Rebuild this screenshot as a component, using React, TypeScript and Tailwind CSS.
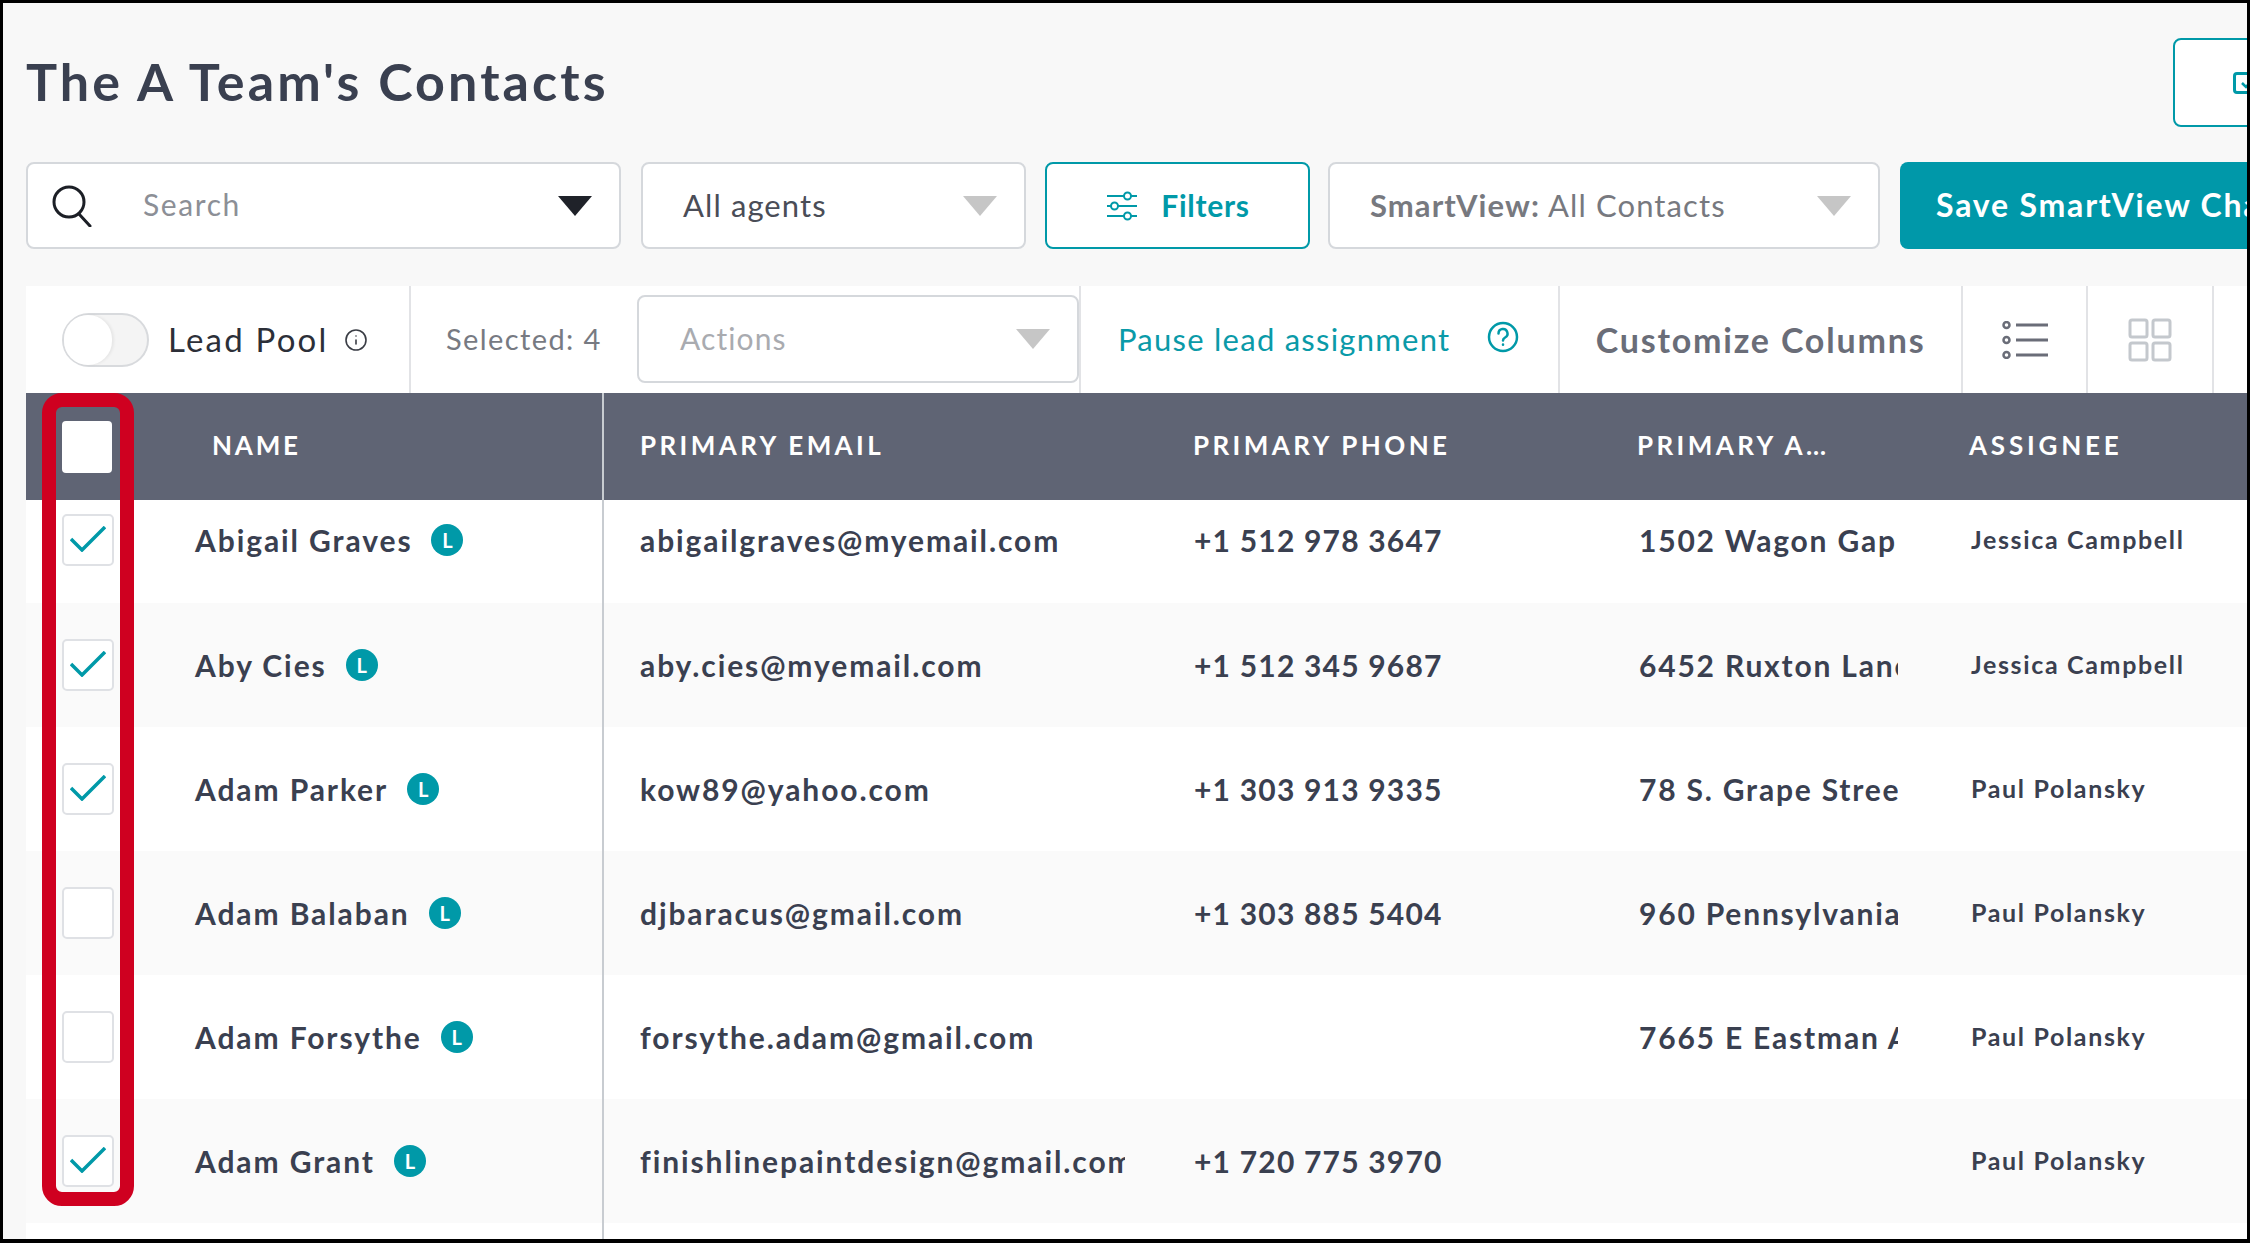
import { Info } from "lucide-react";

const rows = [
  { name: "Abigail Graves", email: "abigailgraves@myemail.com", phone: "+1 512 978 3647", address: "1502 Wagon Gap", agent: "Jessica Campbell", checked: true },
  { name: "Aby Cies", email: "aby.cies@myemail.com", phone: "+1 512 345 9687", address: "6452 Ruxton Lane", agent: "Jessica Campbell", checked: true },
  { name: "Adam Parker", email: "kow89@yahoo.com", phone: "+1 303 913 9335", address: "78 S. Grape Street", agent: "Paul Polansky", checked: true },
  { name: "Adam Balaban", email: "djbaracus@gmail.com", phone: "+1 303 885 5404", address: "960 Pennsylvania St", agent: "Paul Polansky", checked: false },
  { name: "Adam Forsythe", email: "forsythe.adam@gmail.com", phone: "", address: "7665 E Eastman Ave", agent: "Paul Polansky", checked: false },
  { name: "Adam Grant", email: "finishlinepaintdesign@gmail.com", phone: "+1 720 775 3970", address: "", agent: "Paul Polansky", checked: true },
];

const Caret = ({ dark = false }: { dark?: boolean }) => (
  <span
    className={`h-0 w-0 shrink-0 border-x-[17px] border-t-[20px] border-x-transparent ${dark ? "border-t-[#1f2229]" : "border-t-[#c6c6c6]"}`}
  />
);

const App = () => {
  return (
    <div className="relative h-[1243px] w-[2250px] overflow-hidden border-[3px] border-b-4 border-black bg-[#f8f8f8] font-['Lato',sans-serif]">
      <div className="ml-[23px] mt-[35px] flex h-[89px] items-center justify-between">
        <h1 className="mb-[4px] text-[52px] font-bold tracking-[3.1px] text-[#3a4050]">The A Team's Contacts</h1>
        <div className="flex h-[89px] w-[300px] shrink-0 translate-x-[226px] items-center rounded-l-lg border-2 border-[#0099a8] bg-white pl-[58px]">
          <span className="flex h-[22px] w-[30px] shrink-0 items-center justify-center rounded border-[3px] border-[#0099a8]">
            <svg width="14" height="12" viewBox="0 0 14 12" fill="none" stroke="#0099a8" strokeWidth="2.5">
              <path d="M1 6l4 4 8-9" />
            </svg>
          </span>
        </div>
      </div>

      <div className="ml-[23px] mt-[35px] flex h-[87px]">
        <div className="flex w-[595px] shrink-0 items-center rounded-lg border-2 border-[#d5d8dc] bg-white pl-[24px] pr-[27px]">
          <svg width="40" height="42" viewBox="0 0 40 42" fill="none" stroke="#1c1f26" strokeWidth="3" strokeLinecap="round" className="shrink-0">
            <circle cx="17" cy="17" r="15" />
            <path d="M27 29l11 12" />
          </svg>
          <span className="mb-[3px] ml-[51px] flex-1 text-[30px] tracking-[1.6px] text-[#8c8f96]">Search</span>
          <Caret dark />
        </div>
        <div className="ml-[20px] flex w-[385px] shrink-0 items-center justify-between rounded-lg border-2 border-[#d5d8dc] bg-white pl-[40px] pr-[27px]">
          <span className="text-[31px] tracking-[1.1px] text-[#4a4d57]">All agents</span>
          <Caret />
        </div>
        <div className="ml-[19px] flex w-[265px] shrink-0 items-center justify-center gap-[22px] rounded-lg border-2 border-[#0099a8] bg-white">
          <svg width="34" height="34" viewBox="0 0 34 34" fill="none" stroke="#0099a8" strokeWidth="2">
            <path d="M2 7h17M26 7h6M2 17h4M13 17h19M2 27h17M26 27h6" />
            <circle cx="22.5" cy="7" r="3.5" />
            <circle cx="9.5" cy="17" r="3.5" />
            <circle cx="22.5" cy="27" r="3.5" />
          </svg>
          <span className="text-[30px] font-bold tracking-[0.7px] text-[#0099a8]">Filters</span>
        </div>
        <div className="ml-[18px] flex w-[552px] shrink-0 items-center justify-between rounded-lg border-2 border-[#d5d8dc] bg-white pl-[40px] pr-[27px]">
          <span className="text-[31px] tracking-[1.1px] text-[#77797f]">
            <b className="font-bold">SmartView:</b> All Contacts
          </span>
          <Caret />
        </div>
        <div className="ml-[20px] flex w-[420px] shrink-0 items-center rounded-lg bg-[#0098a9] pl-[36px]">
          <span className="mb-[2px] whitespace-nowrap text-[32px] font-bold tracking-[1.8px] text-white">Save SmartView Changes</span>
        </div>
      </div>

      <div className="ml-[23px] mt-[37px] flex h-[107px] bg-white">
        <div className="flex w-[385px] shrink-0 items-center border-r-2 border-[#e2e3e6] pl-[36px]">
          <span className="relative h-[54px] w-[87px] shrink-0 rounded-full border-2 border-[#d8dadd] bg-[#f4f4f4]">
            <span className="absolute left-0 top-0 h-[50px] w-[48px] rounded-full bg-white shadow-[2px_0_3px_rgba(0,0,0,0.06)]" />
          </span>
          <span className="ml-[19px] text-[33px] tracking-[2.2px] text-[#2c2f38]">Lead Pool</span>
          <Info size={24} strokeWidth={1.6} className="ml-[16px] text-[#3a3d45]" />
        </div>
        <div className="flex w-[670px] shrink-0 items-center border-r-2 border-[#e2e3e6] pl-[35px] pr-0">
          <span className="mb-[2px] w-[191px] shrink-0 text-[29px] tracking-[1.4px] text-[#777a82]">Selected: 4</span>
          <div className="mb-[2px] flex h-[88px] w-[442px] shrink-0 items-center justify-between rounded-lg border-2 border-[#d5d8dc] bg-white pl-[41px] pr-[27px]">
            <span className="text-[30px] tracking-[1.1px] text-[#a9abb0]">Actions</span>
            <Caret />
          </div>
        </div>
        <div className="flex w-[479px] shrink-0 items-center border-r-2 border-[#e2e3e6] pl-[37px]">
          <span className="w-[369px] shrink-0 text-[31px] tracking-[1.25px] text-[#0a9aa8]">Pause lead assignment</span>
          <svg width="32" height="32" viewBox="0 0 32 32" fill="none" stroke="#0099a8" strokeWidth="2.5" strokeLinecap="round" className="mb-[6px]">
            <circle cx="16" cy="16" r="14" />
            <path d="M11.5 12.5a4.5 4.5 0 1 1 6.6 4c-1.4.8-2.1 1.5-2.1 3" />
            <path d="M16 23.5v.2" />
          </svg>
        </div>
        <div className="flex w-[403px] shrink-0 items-center justify-center border-r-2 border-[#e2e3e6]">
          <span className="text-[34px] font-bold tracking-[1.8px] text-[#6a6d78]">Customize Columns</span>
        </div>
        <div className="flex w-[125px] shrink-0 items-center justify-center border-r-2 border-[#e2e3e6]">
          <svg width="46" height="38" viewBox="0 0 46 38" fill="none" stroke="#6a6d78">
            <circle cx="4.5" cy="4" r="3" strokeWidth="2.5" />
            <circle cx="4.5" cy="19" r="3" strokeWidth="2.5" />
            <circle cx="4.5" cy="34" r="3" strokeWidth="2.5" />
            <path d="M14 4h32M14 19h32M14 34h32" strokeWidth="3" />
          </svg>
        </div>
        <div className="flex w-[126px] shrink-0 items-center justify-center border-r-2 border-[#e2e3e6]">
          <svg width="44" height="44" viewBox="0 0 44 44" fill="none" stroke="#c4c8cd" strokeWidth="3">
            <rect x="2" y="2" width="17" height="17" rx="2" />
            <rect x="25" y="2" width="17" height="17" rx="2" />
            <rect x="2" y="25" width="17" height="17" rx="2" />
            <rect x="25" y="25" width="17" height="17" rx="2" />
          </svg>
        </div>
      </div>

      <div className="ml-[23px] flex h-[107px] items-center bg-[#5f6474] text-[26px] font-bold tracking-[3.4px] text-white">
        <div className="flex h-full w-[578px] shrink-0 items-center border-r-2 border-[#c8ccd1] pl-[36px]">
          <span className="h-[52px] w-[50px] shrink-0 rounded-[4px] bg-white" />
          <span className="mb-[2px] ml-[100px] tracking-[2.8px]">NAME</span>
        </div>
        <span className="mb-[2px] w-[588px] shrink-0 pl-[36px]">PRIMARY EMAIL</span>
        <span className="mb-[2px] w-[445px] shrink-0 pl-[1px]">PRIMARY PHONE</span>
        <span className="mb-[2px] w-[332px] shrink-0">PRIMARY A…</span>
        <span className="mb-[2px] tracking-[3.8px]">ASSIGNEE</span>
      </div>

      <div className="ml-[23px] flex h-[739px] flex-col bg-white">
        {rows.map((r, i) => (
          <div
            key={r.name}
            className={`flex shrink-0 items-stretch ${i === 0 ? "h-[103px]" : "h-[124px]"} ${i % 2 === 1 ? "bg-[#fafafa]" : "bg-white"}`}
          >
            <div className={`flex w-[578px] shrink-0 items-center border-r-2 border-[#c8ccd1] pl-[36px] ${i === 0 ? "pb-[23px]" : ""}`}>
              <span className="flex h-[52px] w-[52px] shrink-0 items-center justify-center rounded-[5px] border-2 border-[#dfe1e5] bg-white">
                {r.checked && (
                  <svg width="36" height="26" viewBox="0 0 36 26" fill="none" stroke="#0099a8" strokeWidth="3.5" className="mb-[2px]">
                    <path d="M1 13l11 11L35 1" />
                  </svg>
                )}
              </span>
              <span className="ml-[81px] text-[30px] font-bold tracking-[1.9px] text-[#3a4050]">{r.name}</span>
              <span className="ml-[19px] flex h-[32px] w-[32px] shrink-0 items-center justify-center rounded-full bg-[#0099a8] text-[20px] font-bold text-white">
                L
              </span>
            </div>
            <div className={`flex min-w-0 flex-1 items-center text-[30px] font-bold text-[#3a4050] ${i === 0 ? "pb-[23px]" : ""}`}>
              <span className="ml-[36px] w-[485px] shrink-0 overflow-hidden whitespace-nowrap tracking-[1.9px]">{r.email}</span>
              <span className="ml-[68px] w-[446px] shrink-0 pl-[1px] whitespace-nowrap tracking-[1.2px]">{r.phone}</span>
              <span className="w-[259px] shrink-0 overflow-hidden whitespace-nowrap tracking-[1.8px]">{r.address}</span>
              <span className="ml-[73px] whitespace-nowrap text-[25px] tracking-[1.65px]">{r.agent}</span>
            </div>
          </div>
        ))}
        <div className="flex flex-1">
          <div className="w-[578px] shrink-0 border-r-2 border-[#c8ccd1]" />
        </div>
      </div>

      <div className="absolute left-[39px] top-[390px] h-[813px] w-[92px] rounded-[20px] border-[14px] border-[#cf0020]" />
    </div>
  );
};

export default App;
